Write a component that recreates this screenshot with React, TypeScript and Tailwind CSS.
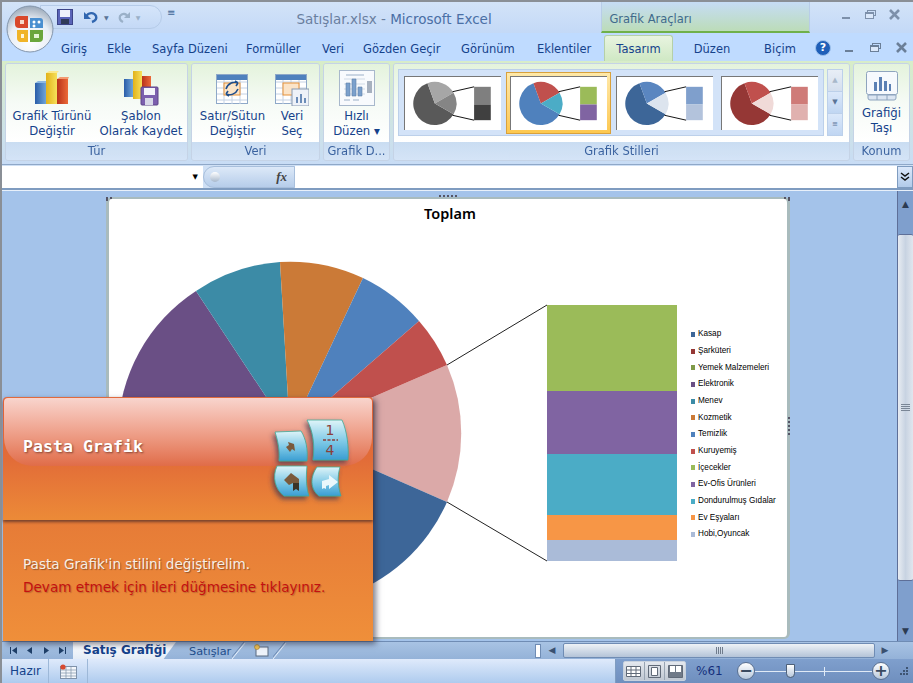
import type { ReactNode } from "react";

const NAVY = "text-[#15428b]";

// point on a circle, degrees clockwise from 12 o'clock
function polar(cx: number, cy: number, r: number, deg: number) {
  const a = (deg * Math.PI) / 180;
  return [cx + r * Math.sin(a), cy - r * Math.cos(a)];
}

function slice(cx: number, cy: number, r: number, from: number, to: number) {
  const [x1, y1] = polar(cx, cy, r, from);
  const [x2, y2] = polar(cx, cy, r, to);
  const large = to - from > 180 ? 1 : 0;
  return `M${cx} ${cy}L${x1} ${y1}A${r} ${r} 0 ${large} 1 ${x2} ${y2}Z`;
}

const thumbs = [
  { a: "#595959", b: "#a6a6a6", c: "#858585", top: "#7f7f7f", bottom: "#404040" },
  { a: "#4f81bd", b: "#c0504d", c: "#4bacc6", top: "#9bbb59", bottom: "#8064a2" },
  { a: "#3d6698", b: "#5a86c0", c: "#dce4ee", top: "#7f9fcc", bottom: "#b3c3dc" },
  { a: "#953735", b: "#c0504d", c: "#f0dad8", top: "#cf7b78", bottom: "#e0b1af" },
];

const legend = [
  ["Kasap", "#3d6698"],
  ["Şarküteri", "#953735"],
  ["Yemek Malzemeleri", "#7f9a48"],
  ["Elektronik", "#6a4f85"],
  ["Menev", "#3c8ba6"],
  ["Kozmetik", "#cb7a37"],
  ["Temizlik", "#4f81bd"],
  ["Kuruyemiş", "#c0504d"],
  ["İçecekler", "#9bbb59"],
  ["Ev-Ofis Ürünleri", "#8064a2"],
  ["Dondurulmuş Gıdalar", "#4bacc6"],
  ["Ev Eşyaları", "#f79646"],
  ["Hobi,Oyuncak", "#aabbd8"],
];

function Thumb({ t }: { t: (typeof thumbs)[number] }) {
  return (
    <svg width="97" height="54" viewBox="0 0 97 54" className="bg-white border-l border-t border-[#777]">
      <path d={slice(30, 27, 22, 120, 340)} fill={t.a} />
      <path d={slice(30, 27, 22, -20, 60)} fill={t.b} />
      <path d={slice(30, 27, 22, 60, 120)} fill={t.c} />
      <path d="M48 15L70 10M48 39L70 44" stroke="#111" strokeWidth="1" />
      <rect x="70" y="10" width="17" height="18" fill={t.top} />
      <rect x="70" y="28" width="17" height="16" fill={t.bottom} />
    </svg>
  );
}

function Group({ label, width, children }: { label: string; width: string; children: ReactNode }) {
  return (
    <div className={`${width} h-[98px] flex flex-col rounded-[3px] border border-[#c5d3e6] overflow-hidden shrink-0`}>
      <div className="flex-1 flex bg-gradient-to-b from-[#e4f3dc] via-[#f6fbf6] to-white min-h-0">{children}</div>
      <div className={`h-[18px] bg-gradient-to-b from-[#c9dcf3] to-[#d8e6f8] text-center text-[11.5px] leading-[18px] ${NAVY} opacity-80`}>
        {label}
      </div>
    </div>
  );
}

function BigButton({ width, icon, lines }: { width: string; icon: ReactNode; lines: ReactNode[] }) {
  return (
    <div className={`${width} flex flex-col items-center`}>
      <div className="h-[41px] flex items-end justify-center">{icon}</div>
      <div className={`mt-[3px] text-center text-[11.7px] leading-[14.5px] whitespace-nowrap ${NAVY}`}>
        {lines.map((l, i) => (
          <div key={i}>{l}</div>
        ))}
      </div>
    </div>
  );
}

function BarsIcon() {
  return (
    <svg width="36" height="36" viewBox="0 0 36 36">
      <defs>
        <linearGradient id="bb" x1="0" x2="1" y1="0" y2="0"><stop offset="0" stopColor="#2a5da8" /><stop offset="1" stopColor="#6fa5d8" /></linearGradient>
        <linearGradient id="by" x1="0" x2="1" y1="0" y2="0"><stop offset="0" stopColor="#e2b21a" /><stop offset="1" stopColor="#f6e05a" /></linearGradient>
        <linearGradient id="br" x1="0" x2="1" y1="0" y2="0"><stop offset="0" stopColor="#b8321a" /><stop offset="1" stopColor="#ec6a38" /></linearGradient>
      </defs>
      <rect x="1" y="13" width="11" height="21" fill="url(#bb)" />
      <path d="M1 13l3-2h10l-2 2z" fill="#8db8e2" />
      <rect x="12" y="3" width="11" height="31" fill="url(#by)" />
      <path d="M12 3l3-2h10l-2 2z" fill="#fbe88c" />
      <rect x="23" y="9" width="11" height="25" fill="url(#br)" />
      <path d="M23 9l3-2h9l-1 2z" fill="#f39a70" />
    </svg>
  );
}

function SaveBarsIcon() {
  return (
    <svg width="36" height="36" viewBox="0 0 36 36">
      <rect x="1" y="9" width="9" height="18" fill="url(#bb)" />
      <rect x="10" y="1" width="9" height="28" fill="url(#by)" />
      <rect x="19" y="6" width="9" height="14" fill="url(#br)" />
      <rect x="18" y="17" width="17" height="18" rx="1" fill="#7c5fae" stroke="#5c4588" />
      <rect x="21" y="18" width="11" height="7" fill="#f4f4fa" />
      <rect x="22" y="28" width="8" height="7" fill="#d8d8e8" />
    </svg>
  );
}

function GridIcon({ inset }: { inset?: boolean }) {
  const lines = [8, 14, 20, 26];
  return (
    <svg width="34" height="32" viewBox="0 0 34 32">
      <rect x="0.5" y="0.5" width="31" height="29" fill="#fff" stroke="#8ea8c8" />
      <rect x="1" y="1" width="30" height="5" fill="#4f81bd" />
      {lines.map((y) => (
        <path key={y} d={`M1 ${y}H31`} stroke="#c4d2e4" />
      ))}
      <path d="M8 6V30M16 6V30M24 6V30" stroke="#c4d2e4" />
      <rect x="8" y="9" width="16" height="12" fill="#fbe4c8" stroke="#e69138" />
      {inset ? (
        <g>
          <rect x="17" y="15" width="17" height="17" fill="#eef2f8" stroke="#8899b0" />
          <path d="M21 29V23h2v6zM25 29V20h2v9zM29 29v-5h2v5z" fill="#6c8db8" />
        </g>
      ) : (
        <path d="M10 15C12 9 18 7 22 9M22 9l-3-2M22 9l-2 3M22 15c-2 5-8 7-12 5M10 20l3 2M10 20l2-3" stroke="#1f4e8c" strokeWidth="1.6" fill="none" />
      )}
    </svg>
  );
}

function QuickIcon() {
  return (
    <svg width="36" height="36" viewBox="0 0 36 36">
      <rect x="0.5" y="0.5" width="35" height="35" fill="#f8fafd" stroke="#a8b8cc" />
      <path d="M7 5H25M5 30h6M14 30h6" stroke="#9cb0c8" strokeWidth="1" />
      <path d="M5 9H26M5 14H26M5 19H26M5 24H26" stroke="#d0dae6" />
      <path d="M7 26V13h4v13zM13 26V9h4v17zM19 26v-9h4v9z" fill="#7ba0cc" stroke="#5f80aa" strokeWidth="0.6" />
      <rect x="28" y="11" width="5" height="12" fill="#a7b1bf" />
    </svg>
  );
}

function MoveIcon() {
  return (
    <svg width="32" height="30" viewBox="0 0 32 30">
      <rect x="0.5" y="0.5" width="31" height="23" rx="2" fill="#f6f9fd" stroke="#8ea4be" />
      <path d="M2 24h28v3a2 2 0 0 1-2 2H4a2 2 0 0 1-2-2zM11 24v5M21 24v5" fill="#dbe5f2" stroke="#8ea4be" />
      <path d="M8 20V11h3v9zM13 20V6h3v14zM18 20V10h3v10zM23 20v-7h2v7z" fill="#5b80b4" />
    </svg>
  );
}

function Wc({ kind, dark }: { kind: "min" | "max" | "close"; dark?: boolean }) {
  const color = dark ? "#6b7f98" : "#7d90aa";
  return (
    <svg width="14" height="12" viewBox="0 0 14 12">
      {kind === "min" && <rect x="2" y="8" width="8" height="2" fill={color} />}
      {kind === "max" && (
        <g fill="none" stroke={color}>
          <rect x="3.5" y="1.5" width="8" height="5" />
          <rect x="1.5" y="3.5" width="8" height="6" fill="#dbe8fa" />
          <path d="M2 4h7" strokeWidth="2" />
        </g>
      )}
      {kind === "close" && <path d="M2 1l9 9M11 1l-9 9" stroke={color} strokeWidth="2.6" />}
    </svg>
  );
}

function OfficeButton() {
  return (
    <svg width="48" height="48" viewBox="0 0 48 48">
      <defs>
        <radialGradient id="orb" cx="0.5" cy="0.75" r="0.75">
          <stop offset="0" stopColor="#fff" />
          <stop offset="0.6" stopColor="#e8eef6" />
          <stop offset="1" stopColor="#9aa8b8" />
        </radialGradient>
      </defs>
      <circle cx="24" cy="24" r="23" fill="url(#orb)" stroke="#8496ac" />
      <path d="M9 15a4 4 0 0 1 4-4h9v12H13a4 4 0 0 1-4-4z" fill="#d9482b" />
      <path d="M14 15h4v4h-4z" fill="#f6d8c8" />
      <path d="M24 13h10a3 3 0 0 1 3 3v7H24z" fill="#4a8fd0" />
      <circle cx="28" cy="17" r="1.5" fill="#fff" />
      <circle cx="33" cy="17" r="1.5" fill="#fff" />
      <circle cx="28" cy="21" r="1.5" fill="#fff" />
      <path d="M11 25h11v12h-8a4 4 0 0 1-3-4z" fill="#f0b428" />
      <path d="M15 29h3v4h-3z" fill="#fff6d8" />
      <path d="M24 25h13v8a4 4 0 0 1-4 4h-9z" fill="#6aa63c" />
      <path d="M28 29h5v4h-5z" fill="#e4f4d4" />
    </svg>
  );
}

function QuickAccess() {
  return (
    <div className="ml-[-14px] pl-[16px] pr-[8px] w-[122px] h-[24px] mt-[3px] rounded-r-full border border-[#b5cbe8] bg-gradient-to-b from-[#d5e5fa] to-[#c4d9f6] flex items-center gap-[5px]">
      <svg width="16" height="16" viewBox="0 0 16 16">
        <rect x="0.5" y="0.5" width="15" height="15" fill="#5a64b8" stroke="#3c4488" />
        <rect x="3" y="1" width="10" height="7" fill="#eef1fa" />
        <rect x="4" y="10" width="8" height="5" fill="#2f3a58" />
      </svg>
      <svg width="16" height="14" viewBox="0 0 16 14" className="ml-[5px]">
        <path d="M3 7C5 2 11 2 13 6C14 9 12 11 9 12" fill="none" stroke="#3066b0" strokeWidth="2.4" />
        <path d="M1 2v7h7z" fill="#3066b0" />
      </svg>
      <span className="text-[6px] text-[#5a7496]">▼</span>
      <svg width="14" height="14" viewBox="0 0 14 14" className="ml-[3px]">
        <path d="M11 7C9 3 5 3 3 6C2 9 4 11 6 12" fill="none" stroke="#9ab0c8" strokeWidth="2.2" />
        <path d="M13 2v6H7z" fill="#9ab0c8" />
      </svg>
      <span className="text-[6px] text-[#9ab0c8]">▼</span>
    </div>
  );
}

function Nav({ d }: { d: string }) {
  return (
    <svg width="9" height="9" viewBox="0 0 9 9">
      <path d={d} fill="#1f3f68" />
    </svg>
  );
}

function TabSlant() {
  return (
    <svg width="14" height="17" viewBox="0 0 14 17" className="shrink-0">
      <path d="M0 17L13 1" stroke="#e8f0fa" strokeWidth="1" />
      <path d="M-1 16L12 0" stroke="#6f8cb4" strokeWidth="1" />
    </svg>
  );
}

function TutorialTiles() {
  return (
    <svg width="110" height="100" viewBox="0 0 110 100" className="absolute left-[257px] top-[13px]">
      <defs>
        <linearGradient id="tile" x1="0" x2="0" y1="0" y2="1">
          <stop offset="0" stopColor="#dff4f8" />
          <stop offset="0.55" stopColor="#7cc8e6" />
          <stop offset="1" stopColor="#3a9dd2" />
        </linearGradient>
        <filter id="tileShadow" x="-30%" y="-30%" width="170%" height="170%">
          <feDropShadow dx="-2" dy="3" stdDeviation="2.5" floodColor="#3a3050" floodOpacity="0.7" />
        </filter>
      </defs>
      <g stroke="#3fa898" strokeWidth="0.8" fill="url(#tile)" filter="url(#tileShadow)">
        <path d="M47 9L82 9C87 20 89 36 88 49L53 49C55 34 53 20 47 9Z" />
        <path d="M15 21L41 20C46 28 48 38 47 50L19 50C20 40 18 30 15 21Z" />
        <path d="M17 55L47 55C46 66 46 76 49 85L24 85C15 78 12 66 17 55Z" />
        <path d="M57 56L80 56C77 66 78 76 81 85L59 85C50 78 50 66 57 56Z" />
      </g>
      <text x="70" y="24" textAnchor="middle" fontSize="14" fill="#8a3f3a" fontFamily="DejaVu Sans, sans-serif">1</text>
      <path d="M63 29H78" stroke="#8a3f3a" strokeWidth="1.4" strokeDasharray="3 1.5" />
      <text x="70" y="44" textAnchor="middle" fontSize="14" fill="#8a3f3a" fontFamily="DejaVu Sans, sans-serif">4</text>
      <path d="M28 31l6 2 1 7-3-2-2 3-4-5 3-2z" fill="#7a5a3c" />
      <path d="M24 69l7-7 8 6v9h-5l-1-5-4 2z" fill="#7a5a3c" />
      <path d="M33 72h6v8l-3-2-3 2z" fill="#3a3428" />
      <path d="M62 78v-8l7-2v-4l9 7-9 7v-4l-3 1v3l-2-1z" fill="#eaf8fc" />
    </svg>
  );
}

function Handle({ className }: { className: string }) {
  return <span className={`absolute border-dotted border-[#556] ${className}`} />;
}

export default function App() {
  const pie: [string, string][] = [
    ["M290 433L447 365A172 172 0 0 1 447 502Z", "#dba9a8"],
    ["M290 433L447 502A172 172 0 0 1 200 580Z", "#3d6698"],
    ["M290 433L200 580A172 172 0 0 1 118 433Z", "#953735"],
    ["M290 433L118 433A172 172 0 0 1 196 291Z", "#6a4f85"],
    ["M290 433L196 291A172 172 0 0 1 280 262Z", "#3c8ba6"],
    ["M290 433L280 262A172 172 0 0 1 363 278Z", "#cb7a37"],
    ["M290 433L363 278A172 172 0 0 1 419 321Z", "#4f81bd"],
    ["M290 433L419 321A172 172 0 0 1 447 365Z", "#c0504d"],
  ];

  return (
    <div className="relative w-[913px] h-[683px] overflow-hidden flex flex-col bg-[#bfdbff] border-t-2 border-l-2 border-[#8a8f96] font-['DejaVu_Sans',sans-serif]">
      {/* Title bar */}
      <div className="h-[31px] flex shrink-0 bg-gradient-to-b from-[#d3e3f8] to-[#c3d9f7]">
        <div className="ml-[4px] mt-[3px] relative z-10">
          <OfficeButton />
        </div>
        <QuickAccess />
        <span className="ml-[5px] mt-[3px] text-[10px] text-[#3e6596]">≡</span>
        <div className="ml-[121px] mt-[8px] text-[13.5px] leading-[18px] text-[#6a7f9f] whitespace-nowrap w-[306px]">
          Satışlar.xlsx - <span className="text-[#4a6fa5]">Microsoft Excel</span>
        </div>
        <div className="w-[209px] ml-[-1px] border-x border-[#b8cde8] border-b-2 border-b-[#6fb04a] bg-gradient-to-b from-[#c6dcf5] to-[#bcdcb8] pt-[10px] pl-[7px] text-[11.5px] leading-[14px] text-[#3f6a8c]">
          Grafik Araçları
        </div>
        <div className="flex-1 flex justify-end items-center gap-[10px] pr-[11px] pb-[6px]">
          <Wc kind="min" />
          <Wc kind="max" />
          <Wc kind="close" />
        </div>
      </div>

      {/* Tabs */}
      <div className="h-[28px] shrink-0 flex items-end text-[11.5px] text-[#15428b] pl-[59px]">
        <span className="h-[24px] leading-[24px] w-[46px]">Giriş</span>
        <span className="h-[24px] leading-[24px] w-[45px]">Ekle</span>
        <span className="h-[24px] leading-[24px] w-[94px]">Sayfa Düzeni</span>
        <span className="h-[24px] leading-[24px] w-[76px]">Formüller</span>
        <span className="h-[24px] leading-[24px] w-[41px]">Veri</span>
        <span className="h-[24px] leading-[24px] w-[98px]">Gözden Geçir</span>
        <span className="h-[24px] leading-[24px] w-[76px]">Görünüm</span>
        <span className="h-[24px] leading-[24px] w-[67px]">Eklentiler</span>
        <span className="h-[26px] leading-[26px] w-[69px] text-center rounded-t-[3px] border border-b-0 border-[#b5d0a8] bg-gradient-to-b from-[#e8f4e0] to-[#cfe8c4]">Tasarım</span>
        <span className="h-[24px] leading-[24px] w-[78px] text-center">Düzen</span>
        <span className="h-[24px] leading-[24px] w-[58px] text-center">Biçim</span>
        <div className="flex-1 flex items-center justify-end gap-[12px] pr-[4px] h-[26px]">
          <span className="w-[16px] h-[16px] rounded-full bg-[#1f5fb8] border border-[#9cc0ec] text-white text-[11px] leading-[14px] font-bold text-center">?</span>
          <Wc kind="min" dark />
          <Wc kind="max" dark />
          <Wc kind="close" dark />
        </div>
      </div>

      {/* Ribbon */}
      <div className="h-[104px] shrink-0 flex gap-[3px] pl-[3px] pt-[2px] pb-[2px] bg-gradient-to-b from-[#d8edc8] to-[#c8dcf5] border-b border-[#8fa8c8]">
        <Group label="Tür" width="w-[183px]">
          <div className="flex pt-[1px] pl-[2px]">
            <BigButton width="w-[88px]" icon={<BarsIcon />} lines={["Grafik Türünü", "Değiştir"]} />
            <BigButton width="w-[90px]" icon={<SaveBarsIcon />} lines={["Şablon", "Olarak Kaydet"]} />
          </div>
        </Group>
        <Group label="Veri" width="w-[129px]">
          <div className="flex pt-[1px] pl-[2px]">
            <BigButton width="w-[77px]" icon={<GridIcon />} lines={["Satır/Sütun", "Değiştir"]} />
            <BigButton width="w-[42px]" icon={<GridIcon inset />} lines={["Veri", "Seç"]} />
          </div>
        </Group>
        <Group label="Grafik D..." width="w-[67px]">
          <BigButton width="w-full pt-[1px]" icon={<QuickIcon />} lines={["Hızlı", "Düzen ▾"]} />
        </Group>
        <Group label="Grafik Stilleri" width="w-[457px]">
          <div className="flex pt-[5px] pl-[4px] gap-[3px]">
            <div className="w-[426px] h-[67px] bg-[#d3e3f8] border border-[#bcd0ea] flex items-center pl-[5px]">
              <Thumb t={thumbs[0]} />
              <div className="ml-[5px] p-[3px] border border-[#d9a13c] bg-gradient-to-b from-[#ffe9a8] to-[#fdc84e] flex">
                <Thumb t={thumbs[1]} />
              </div>
              <div className="ml-[5px]"><Thumb t={thumbs[2]} /></div>
              <div className="ml-[8px]"><Thumb t={thumbs[3]} /></div>
            </div>
            <div className="w-[16px] h-[67px] flex flex-col border border-[#bcd0ea] text-[7px] leading-[20px] text-center text-[#5a7496]">
              <div className="flex-1 bg-gradient-to-b from-[#e8eef6] to-[#d4dfee] text-[#a8b8ca]">▲</div>
              <div className="flex-1 bg-gradient-to-b from-[#dbe8fa] to-[#c0d6f2] border-y border-[#bcd0ea]">▼</div>
              <div className="flex-1 bg-gradient-to-b from-[#dbe8fa] to-[#c0d6f2]">≡</div>
            </div>
          </div>
        </Group>
        <Group label="Konum" width="w-[57px]">
          <div className="w-full flex flex-col items-center pt-[7px]">
            <MoveIcon />
            <div className={`mt-[5px] text-center text-[11.7px] leading-[14.5px] ${NAVY}`}>
              <div>Grafiği</div>
              <div>Taşı</div>
            </div>
          </div>
        </Group>
      </div>

      {/* Formula bar */}
      <div className="h-[25px] shrink-0 flex items-stretch bg-[#cfe0f5] border-b-2 border-[#7f9cc0] pt-[1px]">
        <div className="w-[201px] bg-white flex items-center justify-end pr-[5px] text-[7px] text-black">▼</div>
        <div className="w-[92px] rounded-l-full border border-[#a8bfdc] bg-gradient-to-b from-[#dde9f8] to-[#b6cdea] flex items-center justify-between pl-[6px] pr-[7px]">
          <span className="w-[10px] h-[10px] rounded-full bg-gradient-to-b from-white to-[#a8b8cc]" />
          <span className="font-['Liberation_Serif',serif] italic font-bold text-[13px] text-[#444]">fx</span>
        </div>
        <div className="flex-1 bg-white" />
        <div className="w-[16px] border border-[#7f9cc0] bg-gradient-to-b from-[#dbe8fa] to-[#b2cbea] flex items-center justify-center">
          <svg width="10" height="10" viewBox="0 0 10 10">
            <path d="M1 1l4 3 4-3M1 5l4 3 4-3" fill="none" stroke="#111" strokeWidth="1.5" />
          </svg>
        </div>
      </div>

      {/* Sheet area */}
      <div className="flex-1 min-h-0 flex bg-[#a4c3ea] border-t border-[#e8f0fa]">
        <div className="w-[104px] shrink-0" />
        <div className="relative mt-[6px] mb-[2px] w-[684px] border-x-[3px] border-y-[2px] border-[#a9bbbd] rounded-[6px] bg-white">
          <Handle className="left-[-3px] top-[-2px] w-[6px] h-[4px] border-t-2 border-l-2" />
          <Handle className="left-[330px] top-[-4px] w-[18px] h-0 border-t-2" />
          <Handle className="right-[-3px] top-[-2px] w-[6px] h-[4px] border-t-2 border-r-2" />
          <Handle className="right-[-3px] top-[218px] w-0 h-[18px] border-r-2" />
          <div className="h-[32px] text-center text-[14.5px] leading-[29px] font-semibold text-black font-['Noto_Sans',sans-serif] pl-[4px]">Toplam</div>
          <div className="flex">
            <svg width="572" height="405" viewBox="109 231 572 405" className="shrink-0">
              {pie.map(([d, fill]) => (
                <path key={fill} d={d} fill={fill} />
              ))}
              <path d="M447 365L547 305M447 502L547 561" stroke="#222" strokeWidth="1" />
              <rect x="547" y="305" width="130" height="86" fill="#9bbb59" />
              <rect x="547" y="391" width="130" height="63" fill="#8064a2" />
              <rect x="547" y="454" width="130" height="61" fill="#4bacc6" />
              <rect x="547" y="515" width="130" height="25" fill="#f79646" />
              <rect x="547" y="540" width="130" height="21" fill="#aabbd8" />
            </svg>
            <div className="ml-[10px] pt-[95px] flex flex-col">
              {legend.map(([name, color]) => (
                <div key={name} className="h-[16.7px] flex items-center gap-[3px] whitespace-nowrap font-['Liberation_Sans',sans-serif] text-[8.2px] text-black">
                  <span className="w-[4px] h-[5px] shrink-0" style={{ backgroundColor: color }} />
                  {name}
                </div>
              ))}
            </div>
          </div>
        </div>
        <div className="flex-1" />
        <div className="w-[16px] shrink-0 flex flex-col border-l border-[#5e6f98] bg-[#7f9fcd]">
          <div className="h-[43px] text-center text-[9px] leading-[14px] pt-[6px] text-[#2c3b52]">▲</div>
          <div className="h-[347px] flex flex-col items-center justify-center gap-[1px] rounded-[2px] border-y border-[#5e6f98] bg-gradient-to-r from-[#e8ecf2] via-[#c8d3e2] to-[#e0e6ee]">
            <span className="w-[9px] h-[1px] bg-[#7a8696]" />
            <span className="w-[9px] h-[1px] bg-[#7a8696]" />
            <span className="w-[9px] h-[1px] bg-[#7a8696]" />
            <span className="w-[9px] h-[1px] bg-[#7a8696]" />
          </div>
          <div className="flex-1 flex items-end justify-center pb-[3px] text-[9px] leading-[14px] text-[#2c3b52]">▼</div>
        </div>
      </div>

      {/* Sheet tabs and horizontal scrollbar */}
      <div className="h-[18px] shrink-0 flex items-center bg-gradient-to-b from-[#a8c3e4] to-[#94b2d8] border-t border-[#6f8cb4]">
        <div className="w-[71px] flex items-center justify-between pl-[7px] pr-[6px]">
          <Nav d="M1 1h1v7H1zM3 4.5L8 1v7z" />
          <Nav d="M2 4.5L7 1v7z" />
          <Nav d="M7 4.5L2 1v7z" />
          <Nav d="M8 1H7v7h1zM6 4.5L1 1v7z" />
        </div>
        <div className="h-[17px] w-[103px] bg-gradient-to-b from-white to-[#e4ecf6] pl-[10px] text-[12px] leading-[16px] font-semibold text-[#15428b] [clip-path:polygon(0_0,100%_0,88%_100%,0_100%)]">
          Satış Grafiği
        </div>
        <div className="ml-[13px] w-[43px] text-[11.3px] leading-[17px] pt-[1px] text-[#1f4e8c] whitespace-nowrap">Satışlar</div>
        <TabSlant />
        <div className="ml-[7px] w-[20px]">
          <svg width="16" height="14" viewBox="0 0 16 14">
            <rect x="3" y="3" width="12" height="9" fill="#eef3fa" stroke="#5a6a80" />
            <circle cx="4" cy="3" r="2.5" fill="#f0c050" stroke="#a08030" strokeWidth="0.6" />
          </svg>
        </div>
        <TabSlant />
        <div className="w-[248px]" />
        <div className="w-[6px] h-[14px] bg-white border border-[#6f8cb4]" />
        <div className="w-[22px] text-center text-[9px] text-[#3a5070]">◀</div>
        <div className="w-[312px] h-[15px] flex items-center justify-center gap-[1px] rounded-[2px] border border-[#6f8cb4] bg-gradient-to-b from-[#eef2f6] to-[#b4c4d8]">
          <span className="w-[1px] h-[7px] bg-[#707c8c]" />
          <span className="w-[1px] h-[7px] bg-[#707c8c]" />
          <span className="w-[1px] h-[7px] bg-[#707c8c]" />
          <span className="w-[1px] h-[7px] bg-[#707c8c]" />
        </div>
        <div className="w-[20px] text-center text-[9px] text-[#3a5070]">▶</div>
      </div>

      {/* Status bar */}
      <div className="h-[24px] shrink-0 flex items-stretch bg-gradient-to-b from-[#dfeafb] to-[#aecbee] text-[#15428b] text-[12px]">
        <div className="w-[47px] pl-[8px] leading-[24px] border-r border-[#9db8d8]">Hazır</div>
        <div className="w-[39px] flex items-center justify-center border-r border-[#9db8d8]">
          <svg width="17" height="15" viewBox="0 0 17 15">
            <rect x="0.5" y="2.5" width="16" height="12" fill="#f4f7fb" stroke="#7f92aa" />
            <path d="M1 6H16M1 9H16M1 12H16M6 3V14M11 3V14" stroke="#7f92aa" strokeWidth="0.7" />
            <circle cx="3" cy="3" r="2.6" fill="#d84a30" />
          </svg>
        </div>
        <div className="w-[528px] border-r border-[#7f9cc0]" />
        <div className="flex-1 flex items-center bg-gradient-to-b from-[#7f9fcd] to-[#6f8fbe] pl-[7px]">
          <div className="w-[63px] h-[20px] flex rounded-[2px] border border-[#c8d2de] bg-gradient-to-b from-[#e4e8ee] to-[#c0c8d2]">
            <div className="flex-1 flex items-center justify-center border-r border-[#98a4b2]">
              <svg width="15" height="11" viewBox="0 0 15 11"><path d="M0.5 0.5h14v10h-14zM0 4h15M0 7.5h15M5 0v11M10 0v11" fill="#fff" stroke="#606a78" /></svg>
            </div>
            <div className="flex-1 flex items-center justify-center border-r border-[#98a4b2]">
              <svg width="13" height="13" viewBox="0 0 13 13"><path d="M0.5 0.5h12v12h-12z" fill="none" stroke="#606a78" /><path d="M3.5 2.5h6v8h-6z" fill="#fff" stroke="#606a78" /></svg>
            </div>
            <div className="flex-1 flex items-center justify-center">
              <svg width="15" height="13" viewBox="0 0 15 13"><path d="M0.5 0.5h14v12h-14z" fill="#707a88" stroke="#606a78" /><path d="M2 1h5v6H2zM8 1h5v6H8z" fill="#fff" /></svg>
            </div>
          </div>
          <span className="ml-[10px] w-[28px] text-[12px] text-[#15307b]">%61</span>
          <div className="ml-[13px] w-[18px] h-[18px] rounded-full border border-[#5a7090] bg-gradient-to-b from-white to-[#b8c8dc] text-center text-[16px] leading-[15px] font-bold text-[#3a4a60]">−</div>
          <div className="relative w-[117px] h-[1px] bg-[#e0eaf6]">
            <span className="absolute left-[69px] top-[-4px] w-[1px] h-[9px] bg-[#e0eaf6]" />
            <span className="absolute left-[31px] top-[-7px] w-[9px] h-[14px] rounded-b-[5px] border border-[#4e6078] bg-gradient-to-b from-white to-[#b8c8dc]" />
          </div>
          <div className="w-[18px] h-[18px] rounded-full border border-[#5a7090] bg-gradient-to-b from-white to-[#b8c8dc] text-center text-[16px] leading-[15px] font-bold text-[#3a4a60]">+</div>
          <svg width="10" height="10" viewBox="0 0 10 10" className="ml-[9px]"><path d="M7 1h2v2H7zM4 4h2v2H4zM7 4h2v2H7zM1 7h2v2H1zM4 7h2v2H4zM7 7h2v2H7z" fill="#3e5472" /></svg>
        </div>
      </div>

      {/* Tutorial panel over the sheet */}
      <div className="absolute left-[1px] top-[395px] w-[370px] h-[244px] flex flex-col shadow-[3px_3px_6px_rgba(40,40,60,0.6)]">
        <div className="relative h-[123px] rounded-t-[4px] border-t border-[#e06a3e] bg-gradient-to-b from-[#df6238] via-[#e26c38] to-[#ec8a37] shadow-[0_2px_3px_rgba(70,40,40,0.7)] z-10">
          <div className="h-[68px] mx-[1px] rounded-b-[28px] rounded-t-[4px] bg-gradient-to-b from-[#f8d4cd] to-[#e06c48]" />
          <div className="absolute left-[20px] top-[37px] font-['DejaVu_Sans_Mono',monospace] font-bold text-[16.6px] leading-[24px] text-white [text-shadow:1px_1px_2px_rgba(90,40,30,0.7)]">
            Pasta Grafik
          </div>
          <TutorialTiles />
        </div>
        <div className="flex-1 pt-[33px] pl-[20px] bg-gradient-to-b from-[#e67b37] to-[#ef8f3a] text-[13.6px] leading-[23px] whitespace-nowrap">
          <div className="text-[#f6efe6] [text-shadow:1px_1px_1px_rgba(90,50,30,0.6)]">Pasta Grafik'in stilini değiştirelim.</div>
          <div className="text-[#c41010] [text-shadow:1px_1px_1px_rgba(120,60,30,0.4)]">Devam etmek için ileri düğmesine tıklayınız.</div>
        </div>
      </div>
    </div>
  );
}
